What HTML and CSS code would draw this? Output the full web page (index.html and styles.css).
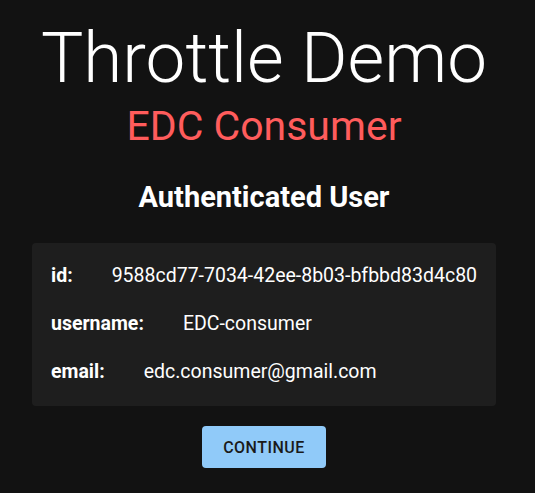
FILE: index.html
```html
<!DOCTYPE html>
<html>
<head>
<meta charset="utf-8">
<link rel="stylesheet" href="styles.css">
</head>
<body>
<main class="page">
  <h1 class="title">Throttle Demo</h1>
  <h2 class="subtitle">EDC Consumer</h2>
  <h3 class="heading">Authenticated User</h3>
  <section class="card">
    <div class="row"><span class="label">id:</span><span class="value">9588cd77-7034-42ee-8b03-bfbbd83d4c80</span></div>
    <div class="row"><span class="label">username:</span><span class="value">EDC-consumer</span></div>
    <div class="row"><span class="label">email:</span><span class="value">edc.consumer@gmail.com</span></div>
  </section>
  <button class="btn">CONTINUE</button>
</main>
</body>
</html>
```

FILE: styles.css
```css
html, body {
  margin: 0;
  padding: 0;
  background: #121212;
  color: #fff;
  font-family: Roboto, "Noto Sans", sans-serif;
}
.page {
  display: flex;
  flex-direction: column;
  align-items: center;
  padding: 16px 7px 0 0;
}
.title {
  margin: 0;
  font-size: 71px;
  font-weight: 300;
  line-height: 84px;
}
.subtitle {
  margin: 2px 0 0;
  font-size: 41px;
  font-weight: 400;
  color: #ff5c5c;
  line-height: 48px;
}
.heading {
  margin: 29px 0 0;
  font-size: 29px;
  font-weight: 700;
  line-height: 36px;
}
.card {
  margin-top: 28px;
  width: 464px;
  box-sizing: border-box;
  background: #1e1e1e;
  border-radius: 4px;
  padding: 9px 10px 10px 19px;
  display: flex;
  flex-direction: column;
}
.row {
  display: flex;
  gap: 39px;
  font-size: 19.5px;
  line-height: 48px;
  white-space: nowrap;
}
.label {
  font-weight: 700;
}
.btn {
  margin-top: 20px;
  background: #90caf9;
  color: #1a1a1a;
  border: none;
  border-radius: 4px;
  font-family: Roboto, sans-serif;
  font-weight: 500;
  font-size: 16px;
  letter-spacing: 0.5px;
  padding: 0 21px;
  height: 42px;
}
```
